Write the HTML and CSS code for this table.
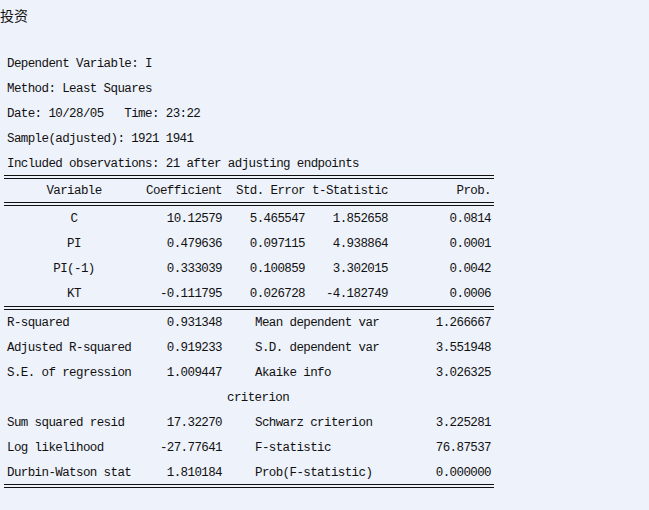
FILE: index.html
```html
<!DOCTYPE html>
<html>
<head>
<meta charset="utf-8">
<link rel="stylesheet" href="styles.css">
</head>
<body>
<div class="title">投资</div>
<div class="info">
  <div class="line">Dependent Variable: I</div>
  <div class="line">Method: Least Squares</div>
  <div class="line">Date: 10/28/05&nbsp;&nbsp;&nbsp;Time: 23:22</div>
  <div class="line">Sample(adjusted): 1921 1941</div>
  <div class="line">Included observations: 21 after adjusting endpoints</div>
</div>
<div class="table">
  <div class="row head">
    <div class="c">Variable</div>
    <div class="r">Coefficient</div>
    <div class="r">Std. Error</div>
    <div class="r">t-Statistic</div>
    <div class="r">Prob.</div>
  </div>
  <div class="body">
    <div class="row">
      <div class="c">C</div><div class="r">10.12579</div><div class="r">5.465547</div><div class="r">1.852658</div><div class="r">0.0814</div>
    </div>
    <div class="row">
      <div class="c">PI</div><div class="r">0.479636</div><div class="r">0.097115</div><div class="r">4.938864</div><div class="r">0.0001</div>
    </div>
    <div class="row">
      <div class="c">PI(-1)</div><div class="r">0.333039</div><div class="r">0.100859</div><div class="r">3.302015</div><div class="r">0.0042</div>
    </div>
    <div class="row">
      <div class="c">KT</div><div class="r">-0.111795</div><div class="r">0.026728</div><div class="r">-4.182749</div><div class="r">0.0006</div>
    </div>
  </div>
  <div class="stats">
    <div class="srow"><div class="l">R-squared</div><div class="r">0.931348</div><div class="l2">Mean dependent var</div><div class="r">1.266667</div></div>
    <div class="srow"><div class="l">Adjusted R-squared</div><div class="r">0.919233</div><div class="l2">S.D. dependent var</div><div class="r">3.551948</div></div>
    <div class="srow"><div class="l">S.E. of regression</div><div class="r">1.009447</div><div class="l2">Akaike info</div><div class="r">3.026325</div></div>
    <div class="srow"><div class="l"></div><div class="r"></div><div class="l3">criterion</div><div class="r"></div></div>
    <div class="srow"><div class="l">Sum squared resid</div><div class="r">17.32270</div><div class="l2">Schwarz criterion</div><div class="r">3.225281</div></div>
    <div class="srow"><div class="l">Log likelihood</div><div class="r">-27.77641</div><div class="l2">F-statistic</div><div class="r">76.87537</div></div>
    <div class="srow last"><div class="l">Durbin-Watson stat</div><div class="r">1.810184</div><div class="l2">Prob(F-statistic)</div><div class="r">0.000000</div></div>
  </div>
</div>
</body>
</html>
```
FILE: styles.css
```css
html, body {
  margin: 0;
  padding: 0;
  background: #eef2fa;
  color: #111;
}
body {
  font-family: "Liberation Mono", "DejaVu Sans Mono", monospace;
  font-size: 12.5px;
  letter-spacing: -0.6px;
}
.title {
  height: 30px;
  line-height: 30px;
  font-family: "Noto Sans CJK SC", sans-serif;
  font-size: 14px;
  letter-spacing: 0;
  margin-bottom: 20px;
}
.info {
  padding-left: 7px;
}
.line {
  height: 25px;
  box-sizing: border-box;
  padding-top: 3px;
  line-height: 22px;
  white-space: pre;
}
.table {
  margin-left: 4px;
  width: 490px;
  border-top: 4px double #111;
  border-bottom: 4px double #111;
}
.row {
  display: grid;
  grid-template-columns: 140px 81px 83px 83px 103px;
  height: 25px;
  box-sizing: border-box;
  padding-top: 2px;
  line-height: 23px;
}
.row.head {
  height: 23px;
  padding-top: 1px;
  line-height: 22px;
}
.body {
  border-top: 4px double #111;
  border-bottom: 4px double #111;
}
.c { text-align: center; }
.r { text-align: right; padding-right: 3px; white-space: nowrap; }
.srow {
  display: grid;
  grid-template-columns: 140px 81px 166px 103px;
  height: 25px;
  box-sizing: border-box;
  padding-top: 2px;
  line-height: 23px;
}
.srow.last { height: 24px; padding-top: 2px; line-height: 22px; }
.l { padding-left: 3px; white-space: nowrap; }
.l2 { padding-left: 30px; white-space: nowrap; }
.l3 { padding-left: 2px; }
```
